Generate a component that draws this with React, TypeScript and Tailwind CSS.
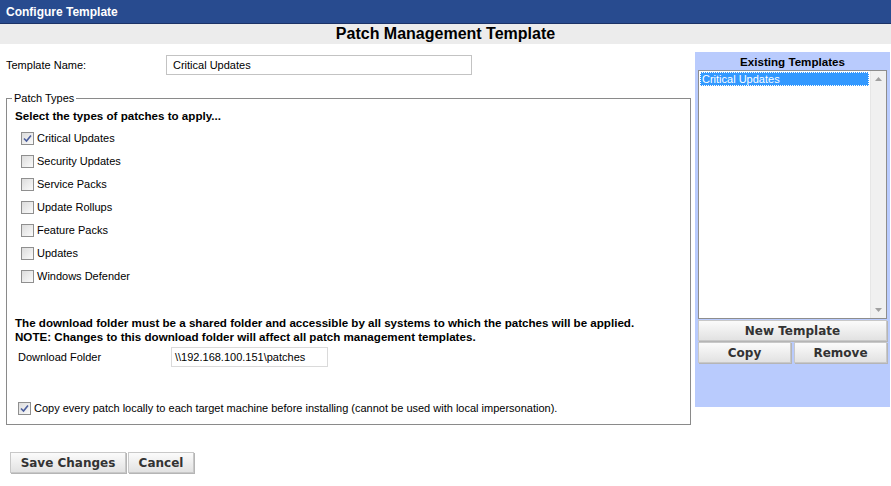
import React from "react";

const patchTypes = [
  { label: "Critical Updates", checked: true },
  { label: "Security Updates", checked: false },
  { label: "Service Packs", checked: false },
  { label: "Update Rollups", checked: false },
  { label: "Feature Packs", checked: false },
  { label: "Updates", checked: false },
  { label: "Windows Defender", checked: false },
];

// Classic XP-style checkbox
function Check({ checked }: { checked: boolean }) {
  return (
    <span className="w-[13px] h-[13px] border border-[#8f8f8f] bg-gradient-to-br from-[#dcdcdc] to-[#fbfbfb] flex items-center justify-center shrink-0">
      {checked && (
        <svg width="9" height="9" viewBox="0 0 9 9">
          <path d="M1 4.5 L3.5 7 L8 1.5" fill="none" stroke="#4a5d9c" strokeWidth="1.6" />
        </svg>
      )}
    </span>
  );
}

function GrayButton({ children, className = "" }: { children: React.ReactNode; className?: string }) {
  return (
    <button
      className={
        "h-[21px] border border-[#c8c8c8] bg-gradient-to-b from-[#fbfbfb] to-[#e2e2e2] text-[#333] font-bold text-[12px] leading-none shadow-[1px_1px_0_#b5b5b5] " +
        className
      }
      style={{ fontFamily: "Verdana, 'DejaVu Sans', sans-serif" }}
    >
      {children}
    </button>
  );
}

export default function App() {
  return (
    <div
      className="w-[891px] h-[486px] bg-white text-[11px] text-black overflow-hidden"
      style={{ fontFamily: "'Liberation Sans', Arial, sans-serif" }}
    >
      {/* Title bar */}
      <div className="h-[24px] bg-[#284b8f] border-b border-[#1b3266] flex items-center px-[6px]">
        <span className="text-white font-bold text-[12px]">Configure Template</span>
      </div>
      <div className="h-[20px] bg-[#ececec] flex items-center justify-center">
        <span className="font-bold text-[16px] leading-none">Patch Management Template</span>
      </div>

      <div className="flex">
        {/* Left side */}
        <div className="w-[695px]">
          <div className="flex items-center mt-[11px] h-[20px]">
            <span className="w-[166px] pl-[6px]">Template Name:</span>
            <div className="w-[306px] h-[20px] border border-[#c3c3c3] flex items-center px-[6px]">Critical Updates</div>
          </div>

          <fieldset className="ml-[6px] w-[685px] h-[334px] mt-[16px] border border-[#8a8a8a] pl-[8px] relative">
            <legend className="px-[2px] ml-[-3px] leading-[14px]">Patch Types</legend>
            <div className="font-bold text-[11.6px] mt-[4px] leading-[14px]">Select the types of patches to apply...</div>
            <div className="flex flex-col mt-[4px] ml-[6px]">
              {patchTypes.map((p) => (
                <div key={p.label} className="h-[23px] flex items-center gap-[3px]">
                  <Check checked={p.checked} />
                  <span>{p.label}</span>
                </div>
              ))}
            </div>
            <div className="font-bold text-[11.6px] leading-[14px] mt-[28px]">
              <div>The download folder must be a shared folder and accessible by all systems to which the patches will be applied.</div>
              <div>NOTE: Changes to this download folder will affect all patch management templates.</div>
            </div>
            <div className="flex items-center mt-[3px] h-[20px] ml-[3px]">
              <span className="w-[153px]">Download Folder</span>
              <div className="w-[157px] h-[20px] border border-[#dadada] flex items-center px-[3px]">\\192.168.100.151\patches</div>
            </div>
            <div className="flex items-center gap-[3px] ml-[3px] mt-[33px]">
              <Check checked={true} />
              <span>Copy every patch locally to each target machine before installing (cannot be used with local impersonation).</span>
            </div>
          </fieldset>

          <div className="flex gap-[2px] ml-[10px] mt-[27px]">
            <GrayButton className="w-[116px]">Save Changes</GrayButton>
            <GrayButton className="w-[66px]">Cancel</GrayButton>
          </div>
        </div>

        {/* Right panel */}
        <div className="w-[195px] h-[355px] mt-[8px] bg-[#b9cbfd] px-[3px]">
          <div className="text-center font-bold text-[11.6px] h-[18px] leading-[20px]">Existing Templates</div>
          <div className="h-[249px] border border-[#8d8d8d] bg-white flex">
            <div className="flex-1 p-[1px]">
              <div className="bg-[#3399ff] text-white h-[14px] leading-[14px] outline outline-1 outline-dotted outline-white -outline-offset-1 px-[2px]">
                Critical Updates
              </div>
            </div>
            <div className="w-[16px] bg-[#f0f0f0] border-l border-[#e6e6e6] flex flex-col justify-between items-center py-[6px]">
              <svg width="7" height="4" viewBox="0 0 7 4">
                <path d="M0 4 L3.5 0 L7 4 Z" fill="#a0a0a0" />
              </svg>
              <svg width="7" height="4" viewBox="0 0 7 4">
                <path d="M0 0 L3.5 4 L7 0 Z" fill="#a0a0a0" />
              </svg>
            </div>
          </div>
          <div className="mt-[1px]">
            <GrayButton className="w-[189px]">New Template</GrayButton>
          </div>
          <div className="flex gap-[3px] mt-[1px]">
            <GrayButton className="w-[93px]">Copy</GrayButton>
            <GrayButton className="w-[93px]">Remove</GrayButton>
          </div>
        </div>
      </div>
    </div>
  );
}
